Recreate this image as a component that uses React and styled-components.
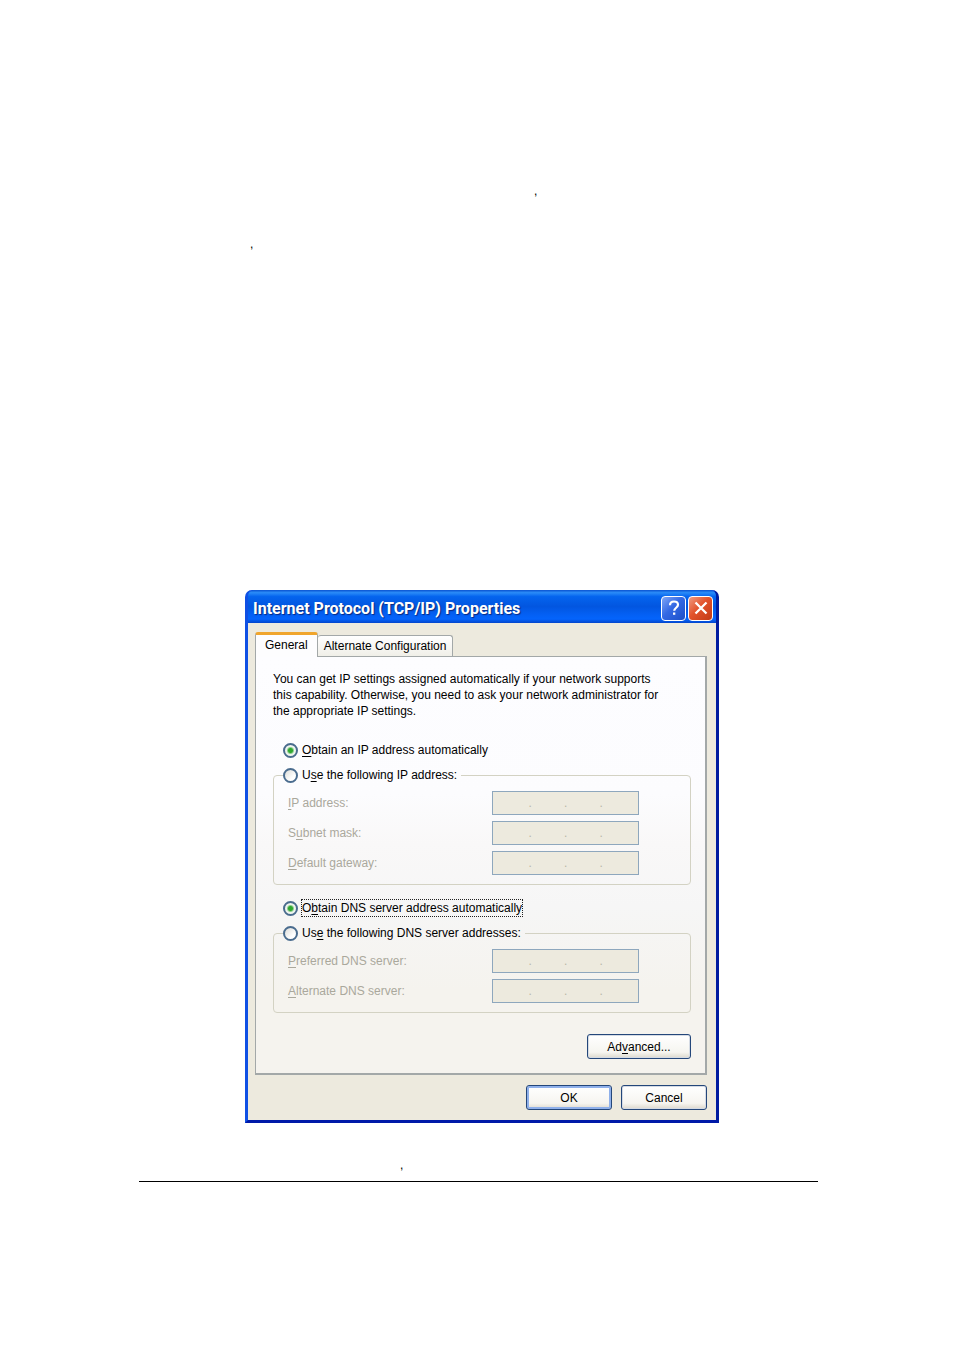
import React, { useState } from "react";
import styled, { createGlobalStyle } from "styled-components";

const addressRows = [
  { id: "ip", before: "", key: "I", after: "P address:" },
  { id: "subnet", before: "S", key: "u", after: "bnet mask:" },
  { id: "gateway", before: "", key: "D", after: "efault gateway:" },
];

const dnsRows = [
  { id: "preferred", before: "", key: "P", after: "referred DNS server:" },
  { id: "alternate", before: "", key: "A", after: "lternate DNS server:" },
];

const AddressField = ({ id, disabled }) => (
  <AddressBox role="group" aria-labelledby={`${id}-label`}>
    {[1, 2, 3, 4].map((part) => (
      <React.Fragment key={part}>
        {part > 1 && <Dot>.</Dot>}
        <Octet
          id={`${id}-${part}`}
          aria-label={`Part ${part}`}
          maxLength={3}
          disabled={disabled}
        />
      </React.Fragment>
    ))}
  </AddressBox>
);

const AddressRows = ({ rows, disabled }) => (
  <Rows>
    {rows.map(({ id, before, key, after }) => (
      <Row key={id}>
        <RowLabel id={`${id}-label`} htmlFor={`${id}-1`} $disabled={disabled}>
          {before}
          <u>{key}</u>
          {after}
        </RowLabel>
        <AddressField id={id} disabled={disabled} />
      </Row>
    ))}
  </Rows>
);

const App = () => {
  const [ipMode, setIpMode] = useState("auto");
  const [dnsMode, setDnsMode] = useState("auto");

  return (
    <>
      <GlobalStyle />
      <Page>
        <Line $indent={395}>,</Line>
        <Line $indent={111}>,</Line>

        <Dialog role="dialog" aria-labelledby="dialog-title">
          <TitleBar>
            <Title id="dialog-title">
              Internet Protocol (TCP/IP) Properties
            </Title>
            <TitleButton aria-label="Help">
              <svg width="14" height="16" viewBox="0 0 14 16" fill="none">
                <path
                  d="M3 5.2C3 2.8 4.6 1.5 7 1.5s4 1.3 4 3.3c0 3-3.8 2.9-3.8 6"
                  stroke="#fff"
                  strokeWidth="2.2"
                />
                <path d="M6 12.5h2.3v2.3H6z" fill="#fff" />
              </svg>
            </TitleButton>
            <TitleButton $close aria-label="Close">
              <svg width="14" height="14" viewBox="0 0 14 14" fill="none">
                <path
                  d="M1.5 1.5l11 11M12.5 1.5l-11 11"
                  stroke="#fff"
                  strokeWidth="2.3"
                />
              </svg>
            </TitleButton>
          </TitleBar>

          <Body>
            <Tabs role="tablist">
              <Tab role="tab" aria-selected="true" $active>
                General
              </Tab>
              <Tab role="tab" aria-selected="false">
                Alternate Configuration
              </Tab>
            </Tabs>

            <Panel role="tabpanel">
              <Intro>
                You can get IP settings assigned automatically if your network
                supports
                <br />
                this capability. Otherwise, you need to ask your network
                administrator for
                <br />
                the appropriate IP settings.
              </Intro>

              <Choice>
                <Radio
                  type="radio"
                  name="ip-mode"
                  checked={ipMode === "auto"}
                  onChange={() => setIpMode("auto")}
                />
                <ChoiceText>
                  <u>O</u>btain an IP address automatically
                </ChoiceText>
              </Choice>
              <Group>
                <Legend>
                  <LegendChoice>
                    <Radio
                      type="radio"
                      name="ip-mode"
                      checked={ipMode === "manual"}
                      onChange={() => setIpMode("manual")}
                    />
                    <ChoiceText>
                      U<u>s</u>e the following IP address:
                    </ChoiceText>
                  </LegendChoice>
                </Legend>
                <AddressRows rows={addressRows} disabled={ipMode === "auto"} />
              </Group>

              <Choice>
                <Radio
                  type="radio"
                  name="dns-mode"
                  checked={dnsMode === "auto"}
                  onChange={() => setDnsMode("auto")}
                />
                <ChoiceText $focused>
                  O<u>b</u>tain DNS server address automatically
                </ChoiceText>
              </Choice>
              <Group>
                <Legend>
                  <LegendChoice>
                    <Radio
                      type="radio"
                      name="dns-mode"
                      checked={dnsMode === "manual"}
                      onChange={() => setDnsMode("manual")}
                    />
                    <ChoiceText>
                      Us<u>e</u> the following DNS server addresses:
                    </ChoiceText>
                  </LegendChoice>
                </Legend>
                <AddressRows rows={dnsRows} disabled={dnsMode === "auto"} />
              </Group>

              <PanelActions>
                <Button $wide>
                  Ad<u>v</u>anced...
                </Button>
              </PanelActions>
            </Panel>

            <Actions>
              <Button $primary>OK</Button>
              <Button>Cancel</Button>
            </Actions>
          </Body>
        </Dialog>

        <PageFooter>
          <Line $indent={261}>,</Line>
        </PageFooter>
      </Page>
    </>
  );
};

export default App;

// =========== Styled Components ===========

const GlobalStyle = createGlobalStyle`
  * {
    box-sizing: border-box;
  }
  body {
    margin: 0;
    background: #fff;
    color: #000;
    font-family: "Liberation Sans", Arial, sans-serif;
    font-size: 12px;
    line-height: 16px;
  }
  button,
  input {
    font: inherit;
    color: inherit;
  }
  u {
    text-underline-offset: 2px;
  }
`;

const Page = styled.main`
  padding: 183px 136px 168px 139px;
`;

const Line = styled.p`
  margin: 0 0 37px;
  padding-left: ${(props) => props.$indent}px;
`;

const Dialog = styled.section`
  max-width: 474px;
  margin: 338px 0 0 106px;
  border: 3px solid #0a3fd8;
  border-color: #0a50e8 #001ca0 #0019a8 #0f50e4;
  border-top: 0;
  border-radius: 7px 7px 0 0;
  background: #0a50e8;
`;

const TitleBar = styled.header`
  display: flex;
  align-items: center;
  gap: 2px;
  height: 33px;
  padding: 3px 3px 0 5px;
  border-radius: 6px 6px 0 0;
  background: linear-gradient(
    #0a52d0 0%,
    #2a8cf8 8%,
    #0464ee 20%,
    #0256e0 50%,
    #0460f4 75%,
    #0464fc 88%,
    #0346cc 100%
  );
`;

const Title = styled.h1`
  flex: 1;
  margin: 0;
  padding-top: 2px;
  color: #fff;
  font-family: Roboto, "Liberation Sans", Arial, sans-serif;
  font-size: 16px;
  font-weight: 700;
  line-height: 20px;
  text-shadow: 1px 1px 1px #0a2a80;
`;

const TitleButton = styled.button`
  display: flex;
  align-items: center;
  justify-content: center;
  width: 25px;
  height: 25px;
  padding: 0;
  border: 1px solid #fff;
  border-radius: 4px;
  background: ${(props) =>
    props.$close
      ? "linear-gradient(135deg, #f09a80, #e2532c 45%, #c33a16)"
      : "linear-gradient(135deg, #7fa6f6, #3469e4 45%, #1c4fc8)"};
`;

const Body = styled.div`
  padding: 9px 9px 10px 7px;
  background: #edeade;
`;

const Tabs = styled.div`
  display: flex;
  align-items: flex-end;
  height: 24px;
`;

const Tab = styled.button`
  position: relative;
  z-index: ${(props) => (props.$active ? 1 : 0)};
  height: ${(props) => (props.$active ? 25 : 21)}px;
  margin-bottom: ${(props) => (props.$active ? -1 : 0)}px;
  padding: ${(props) => (props.$active ? "0 9px 2px" : "0 6px")};
  border: 1px solid #a3a8a8;
  border-top: ${(props) =>
    props.$active ? "3px solid #f0a52c" : "1px solid #a3a8a8"};
  border-bottom: 0;
  border-left-width: ${(props) => (props.$active ? 1 : 0)}px;
  border-radius: 3px 3px 0 0;
  background: ${(props) =>
    props.$active ? "#fdfdfe" : "linear-gradient(#fff, #f0efe8)"};
  white-space: nowrap;
`;

const Panel = styled.div`
  padding: 14px 14px 14px 17px;
  border: 1px solid #a3a8a8;
  border-right-width: 2px;
  border-bottom-width: 2px;
  background: linear-gradient(
    #fdfdff 0%,
    #fcfcfe 33%,
    #f9f8f8 45%,
    #f6f6f6 60%,
    #f5f3ee 80%,
    #f5f3ee 100%
  );
`;

const Intro = styled.p`
  margin: 0 0 23px;
  white-space: nowrap;
`;

const Choice = styled.label`
  display: flex;
  align-items: center;
  gap: 4px;
  width: max-content;
  margin-left: 10px;
`;

const LegendChoice = styled(Choice)`
  margin: 0;
`;

const ChoiceText = styled.span`
  outline: ${(props) => (props.$focused ? "1px dotted #222" : "none")};
`;

const Radio = styled.input`
  appearance: none;
  width: 15px;
  height: 15px;
  margin: 0;
  border: 2px solid #4a6c8e;
  border-radius: 50%;
  background: linear-gradient(135deg, #dcdcd8, #fff 70%);

  &:checked {
    background: radial-gradient(circle, #2fa82f 0 2px, #eef4ee 4px);
  }
`;

const Group = styled.fieldset`
  min-width: 0;
  margin: 9px 0 15px;
  padding: 0 51px 9px 14px;
  border: 1px solid #d3d2c3;
  border-radius: 4px;
`;

const Legend = styled.legend`
  margin-left: -5px;
  padding: 0 4px 0 0;
`;

const Rows = styled.div`
  display: grid;
  gap: 6px;
  padding-top: 8px;
`;

const Row = styled.div`
  display: flex;
  align-items: center;
  justify-content: space-between;
`;

const RowLabel = styled.label`
  color: ${(props) => (props.$disabled ? "#aaa89c" : "#000")};
`;

const AddressBox = styled.div`
  display: flex;
  align-items: center;
  width: 147px;
  height: 24px;
  padding: 0 3px;
  border: 1px solid #8ea7bd;
  background: #edeade;
`;

const Octet = styled.input`
  flex: 1;
  width: 0;
  min-width: 0;
  height: 18px;
  padding: 0;
  border: 0;
  background: transparent;
  text-align: center;
`;

const Dot = styled.span`
  width: 3px;
  color: #b9b7a8;
`;

const PanelActions = styled.div`
  display: flex;
  justify-content: flex-end;
  margin-top: 21px;
`;

const Actions = styled.div`
  display: flex;
  justify-content: flex-end;
  gap: 9px;
  margin-top: 10px;
`;

const Button = styled.button`
  width: ${(props) => (props.$wide ? 104 : 86)}px;
  height: 25px;
  padding: 0;
  border: 1px solid #24477a;
  border-radius: 3px;
  background: linear-gradient(#fff, #f6f5f0 75%, #dcd8cc);
  box-shadow: ${(props) =>
    props.$primary ? "inset 0 0 0 2px #8fb0ea" : "inset 0 0 0 1px #d5dbe4"};
`;

const PageFooter = styled.footer`
  padding-top: 34px;
  border-bottom: 1px solid #000;

  ${Line} {
    margin-bottom: 8px;
  }
`;
